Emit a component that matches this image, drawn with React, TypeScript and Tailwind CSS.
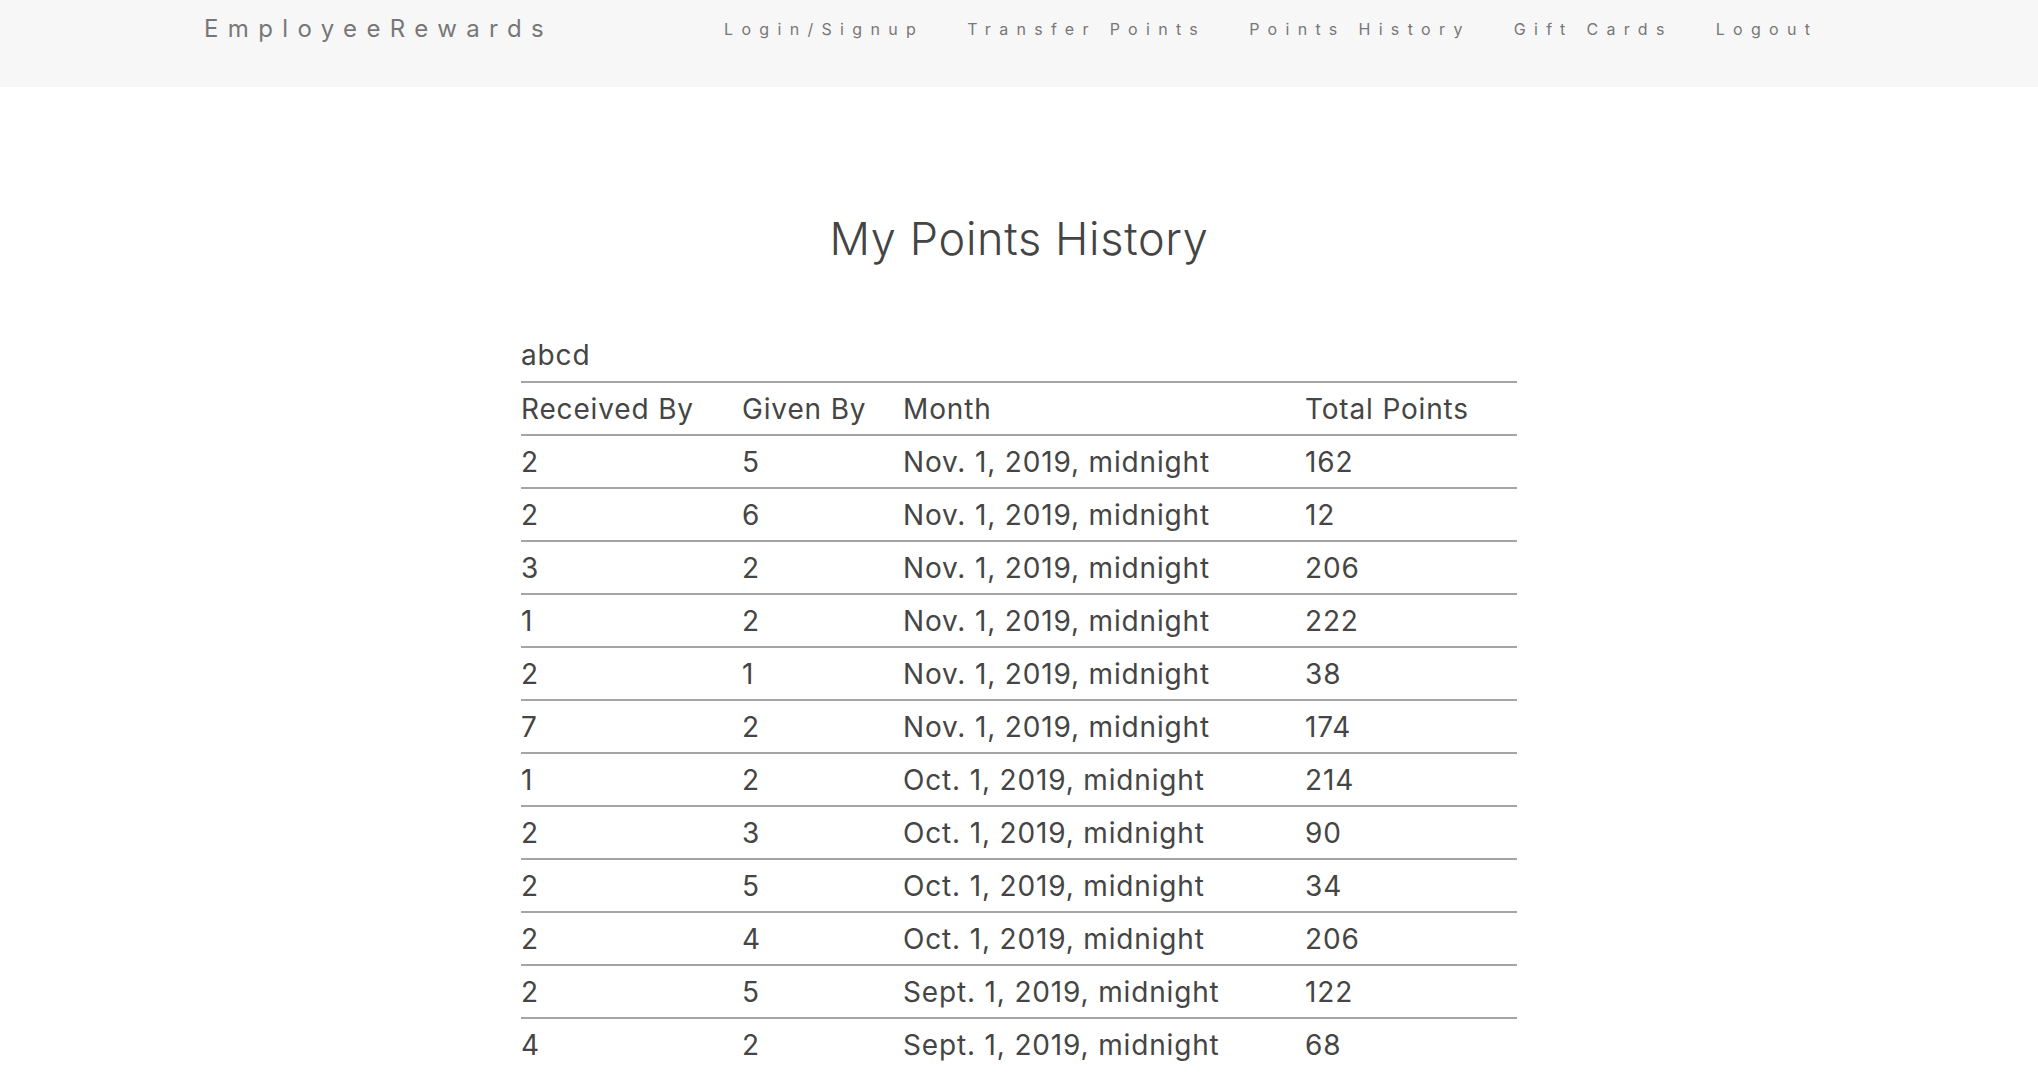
const rows: [string, string, string, string][] = [
  ["2", "5", "Nov. 1, 2019, midnight", "162"],
  ["2", "6", "Nov. 1, 2019, midnight", "12"],
  ["3", "2", "Nov. 1, 2019, midnight", "206"],
  ["1", "2", "Nov. 1, 2019, midnight", "222"],
  ["2", "1", "Nov. 1, 2019, midnight", "38"],
  ["7", "2", "Nov. 1, 2019, midnight", "174"],
  ["1", "2", "Oct. 1, 2019, midnight", "214"],
  ["2", "3", "Oct. 1, 2019, midnight", "90"],
  ["2", "5", "Oct. 1, 2019, midnight", "34"],
  ["2", "4", "Oct. 1, 2019, midnight", "206"],
  ["2", "5", "Sept. 1, 2019, midnight", "122"],
  ["4", "2", "Sept. 1, 2019, midnight", "68"],
];

const links = ["Login/Signup", "Transfer Points", "Points History", "Gift Cards", "Logout"];

export default function App() {
  return (
    <div className="min-h-screen bg-white font-['Inter',sans-serif] text-[#454545]">
      {/* Navbar */}
      <nav className="h-[87px] bg-[#f7f7f7] flex items-start pt-[14px]">
        <div className="pl-[204px] text-[24px] tracking-[0.39em] text-[#777] leading-[30px]">
          EmployeeRewards
        </div>
        <div className="flex gap-[43px] ml-[171px] pt-[1px]">
          {links.map((l) => (
            <a key={l} href="#" className="text-[16px] tracking-[0.52em] text-[#777] leading-[28px]">
              {l}
            </a>
          ))}
        </div>
      </nav>

      <h1 className="mt-[128px] text-center text-[45px] leading-[48px] font-light tracking-[0.015em] text-[#444]">
        My Points History
      </h1>

      <div className="w-[996px] mx-auto mt-[72px] text-[28px] tracking-[0.03em]">
        <div className="leading-[40px] pb-[6px]">abcd</div>
        <table className="w-full border-collapse">
          <thead>
            <tr className="border-t-2 border-[#a5a5a5] h-[53px]">
              <th className="w-[221px] text-left font-normal">Received By</th>
              <th className="w-[161px] text-left font-normal">Given By</th>
              <th className="w-[402px] text-left font-normal">Month</th>
              <th className="text-left font-normal">Total Points</th>
            </tr>
          </thead>
          <tbody>
            {rows.map((r, i) => (
              <tr key={i} className="border-t-2 border-[#a5a5a5] h-[53px]">
                {r.map((c, j) => (
                  <td key={j} className="p-0">{c}</td>
                ))}
              </tr>
            ))}
          </tbody>
        </table>
      </div>
    </div>
  );
}
